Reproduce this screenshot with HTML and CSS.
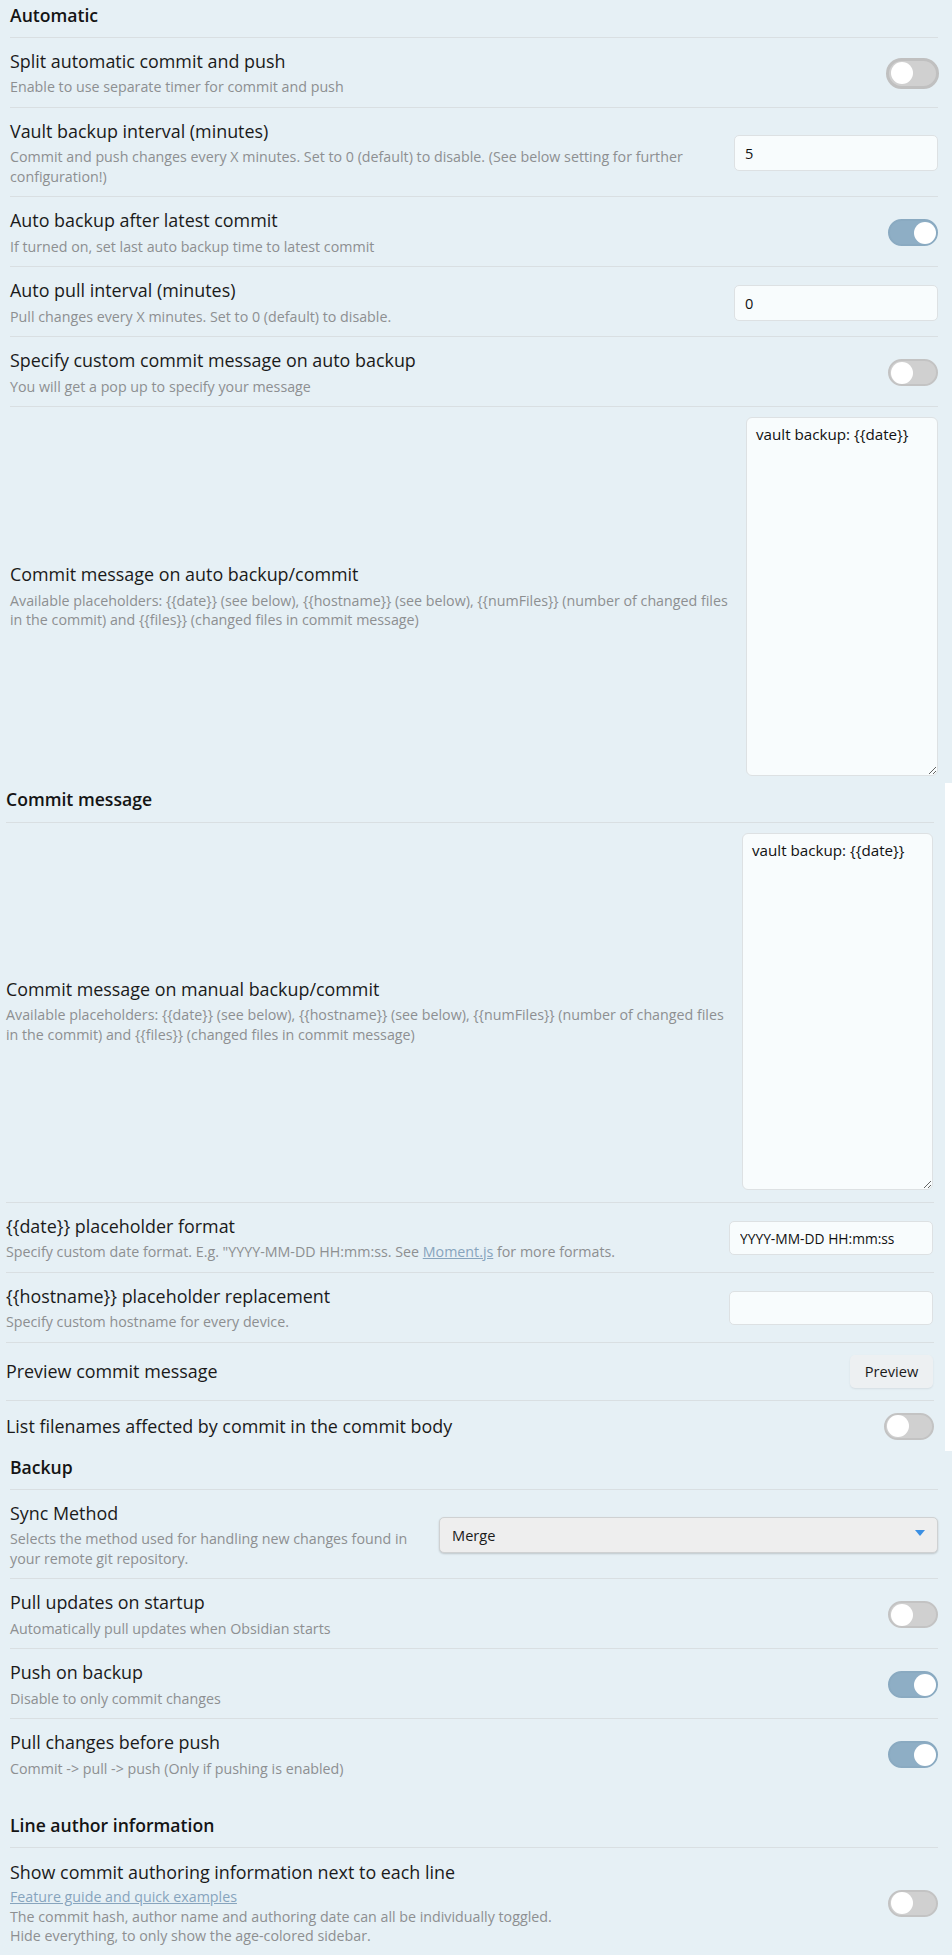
FILE: index.html
```html
<!DOCTYPE html>
<html lang="en">
<head>
<meta charset="utf-8">
<title>Git settings</title>
<link rel="stylesheet" href="styles.css">
</head>
<body>
<div class="page">
  <section class="panel p1">
    <div class="heading">Automatic</div>
    <div class="item">
      <div class="info">
        <div class="name">Split automatic commit and push</div>
        <div class="desc">Enable to use separate timer for commit and push</div>
      </div>
      <div class="control"><span class="toggle hover"></span></div>
    </div>
    <div class="item">
      <div class="info">
        <div class="name">Vault backup interval (minutes)</div>
        <div class="desc">Commit and push changes every X minutes. Set to 0 (default) to disable. (See below setting for further<br>configuration!)</div>
      </div>
      <div class="control"><input class="text" type="text" value="5"></div>
    </div>
    <div class="item">
      <div class="info">
        <div class="name">Auto backup after latest commit</div>
        <div class="desc">If turned on, set last auto backup time to latest commit</div>
      </div>
      <div class="control"><span class="toggle on"></span></div>
    </div>
    <div class="item">
      <div class="info">
        <div class="name">Auto pull interval (minutes)</div>
        <div class="desc">Pull changes every X minutes. Set to 0 (default) to disable.</div>
      </div>
      <div class="control"><input class="text" type="text" value="0"></div>
    </div>
    <div class="item">
      <div class="info">
        <div class="name">Specify custom commit message on auto backup</div>
        <div class="desc">You will get a pop up to specify your message</div>
      </div>
      <div class="control"><span class="toggle"></span></div>
    </div>
    <div class="item area-item first-area">
      <div class="info">
        <div class="name">Commit message on auto backup/commit</div>
        <div class="desc">Available placeholders: {{date}} (see below), {{hostname}} (see below), {{numFiles}} (number of changed files<br>in the commit) and {{files}} (changed files in commit message)</div>
      </div>
      <div class="control"><textarea class="area">vault backup: {{date}}</textarea></div>
    </div>
  </section>

  <section class="panel p2">
    <div class="heading">Commit message</div>
    <div class="item area-item second-area">
      <div class="info">
        <div class="name">Commit message on manual backup/commit</div>
        <div class="desc">Available placeholders: {{date}} (see below), {{hostname}} (see below), {{numFiles}} (number of changed files<br>in the commit) and {{files}} (changed files in commit message)</div>
      </div>
      <div class="control"><textarea class="area area2">vault backup: {{date}}</textarea></div>
    </div>
    <div class="item">
      <div class="info">
        <div class="name">{{date}} placeholder format</div>
        <div class="desc">Specify custom date format. E.g. "YYYY-MM-DD HH:mm:ss. See <a class="link" href="#">Moment.js</a> for more formats.</div>
      </div>
      <div class="control"><input class="text small" type="text" value="YYYY-MM-DD HH:mm:ss"></div>
    </div>
    <div class="item">
      <div class="info">
        <div class="name">{{hostname}} placeholder replacement</div>
        <div class="desc">Specify custom hostname for every device.</div>
      </div>
      <div class="control"><input class="text small" type="text" value=""></div>
    </div>
    <div class="item compact">
      <div class="info">
        <div class="name">Preview commit message</div>
      </div>
      <div class="control"><button class="btn" type="button">Preview</button></div>
    </div>
    <div class="item compact last">
      <div class="info">
        <div class="name">List filenames affected by commit in the commit body</div>
      </div>
      <div class="control"><span class="toggle"></span></div>
    </div>
  </section>

  <section class="panel p3">
    <div class="heading">Backup</div>
    <div class="item">
      <div class="info">
        <div class="name">Sync Method</div>
        <div class="desc">Selects the method used for handling new changes found in<br>your remote git repository.</div>
      </div>
      <div class="control">
        <div class="select"><span>Merge</span><svg class="caret" width="10" height="6" viewBox="0 0 10 6"><path d="M0 0h10L5 6z" fill="#3b8fe3"/></svg></div>
      </div>
    </div>
    <div class="item">
      <div class="info">
        <div class="name">Pull updates on startup</div>
        <div class="desc">Automatically pull updates when Obsidian starts</div>
      </div>
      <div class="control"><span class="toggle"></span></div>
    </div>
    <div class="item">
      <div class="info">
        <div class="name">Push on backup</div>
        <div class="desc">Disable to only commit changes</div>
      </div>
      <div class="control"><span class="toggle on"></span></div>
    </div>
    <div class="item last">
      <div class="info">
        <div class="name">Pull changes before push</div>
        <div class="desc">Commit -&gt; pull -&gt; push (Only if pushing is enabled)</div>
      </div>
      <div class="control"><span class="toggle on"></span></div>
    </div>
    <div class="heading spaced">Line author information</div>
    <div class="item last author">
      <div class="info">
        <div class="name">Show commit authoring information next to each line</div>
        <div class="desc"><a class="link" href="#">Feature guide and quick examples</a><br>The commit hash, author name and authoring date can all be individually toggled.<br>Hide everything, to only show the age-colored sidebar.</div>
      </div>
      <div class="control"><span class="toggle"></span></div>
    </div>
  </section>
</div>
</body>
</html>
```

FILE: styles.css
```css
html, body {
  margin: 0;
  padding: 0;
  background: #ffffff;
}

body {
  font-family: "Open Sans", "Noto Sans", "Liberation Sans", sans-serif;
  color: #1c1c1c;
  width: 952px;
  height: 1955px;
  overflow: hidden;
}

.panel {
  background: #e6f0f5;
  box-sizing: border-box;
  overflow: hidden;
}

.p1 {
  height: 783px;
  padding: 0 14px 0 10px;
}

.p2 {
  height: 668px;
  width: 945px;
  padding: 0 11px 0 6px;
}

.p3 {
  height: 504px;
  padding: 0 14px 0 10px;
}

.heading {
  font-weight: 600;
  font-size: 17.6px;
  line-height: 22.5px;
  color: #141414;
  padding: 4px 0 10px;
  border-bottom: 1px solid #d9dfe2;
}

.p2 .heading {
  padding: 5px 0 11px;
}

.p3 .heading {
  padding: 5px 0 10px;
}

.p3 .heading.spaced {
  padding-top: 26px;
}

.item {
  display: flex;
  align-items: center;
  padding: 12px 0 10px;
  border-bottom: 1px solid #d9dfe2;
}

.item.last {
  border-bottom: none;
}

.item.compact {
  padding: 12px 0 12px;
}

.item.author {
  padding-top: 13px;
}

.info {
  flex: 1 1 auto;
  min-width: 0;
}

.name {
  font-size: 17.9px;
  line-height: 22.5px;
  color: #1a1a1a;
  white-space: nowrap;
}

.desc {
  margin-top: 5px;
  font-size: 14.25px;
  line-height: 19.5px;
  color: #8d8f91;
  white-space: nowrap;
}

.author .desc {
  margin-top: 4px;
}

.link {
  color: #87a4bd;
  text-decoration: underline;
}

.control {
  flex: 0 0 auto;
  display: flex;
  align-items: center;
  justify-content: flex-end;
  margin-left: 16px;
}

/* toggle */
.toggle {
  display: block;
  position: relative;
  width: 50px;
  height: 27px;
  box-sizing: border-box;
  border-radius: 14px;
  background: #d0d0d0;
  border: 2px solid #c3c3c3;
}

.toggle::after {
  content: "";
  position: absolute;
  top: 0.5px;
  left: 0.5px;
  width: 22px;
  height: 22px;
  border-radius: 50%;
  background: #ffffff;
}

.toggle.on {
  background: #8eaec5;
  border-color: #8aaac1;
}

.toggle.on::after {
  left: 23.5px;
}

.toggle.hover {
  width: 53px;
  height: 31px;
  border-radius: 16px;
  border: 3px solid #c0c0c0;
  margin-right: -1px;
}

.toggle.hover::after {
  top: 1.5px;
  left: 1.5px;
  width: 22px;
  height: 22px;
}

/* inputs */
.text {
  width: 204px;
  height: 36px;
  box-sizing: border-box;
  border: 1px solid #dde1e3;
  border-radius: 5px;
  background: #f8fcfd;
  padding: 0 10px;
  font-family: inherit;
  font-size: 14.6px;
  color: #111;
  outline: none;
}

.text.small {
  height: 34px;
  margin-right: 1px;
  font-size: 13.8px;
}

.area {
  display: block;
  width: 192px;
  height: 359px;
  box-sizing: border-box;
  border: 1px solid #dde1e3;
  border-radius: 6px;
  background: #f8fcfd;
  padding: 6px 9px;
  font-family: inherit;
  font-size: 15.2px;
  line-height: 20px;
  color: #111;
  resize: both;
  outline: none;
}

.area.area2 {
  width: 191px;
  height: 357px;
  margin-right: 1px;
}

.area-item.first-area {
  padding: 10px 0 7px;
  border-bottom: none;
}

.area-item.second-area {
  padding: 10px 0 12px;
}

.area-item .info {
  align-self: center;
}

/* button */
.btn {
  width: 83px;
  height: 33px;
  border: none;
  border-radius: 5px;
  background: #edf0f2;
  box-shadow: 0 1px 2px rgba(0, 0, 0, 0.08);
  font-family: inherit;
  font-size: 14.6px;
  color: #1a1a1a;
  margin-right: 1px;
}

/* select */
.select {
  width: 499px;
  height: 36px;
  box-sizing: border-box;
  display: flex;
  align-items: center;
  justify-content: space-between;
  padding: 0 12px 0 12px;
  background: #eeeeee;
  border: 1px solid #cfd1d2;
  border-radius: 5px;
  box-shadow: 0 1px 2px rgba(0, 0, 0, 0.18);
  font-size: 14.6px;
  color: #1a1a1a;
}

.caret {
  margin-top: -3px;
}
```
